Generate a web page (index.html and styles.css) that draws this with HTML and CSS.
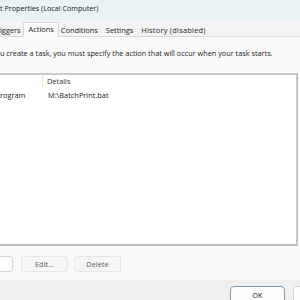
FILE: index.html
```html
<!DOCTYPE html>
<html>
<head>
<meta charset="utf-8">
<link rel="stylesheet" href="styles.css">
</head>
<body>
<div class="dialog">
  <div class="titlebar"><span class="title">t Properties (Local Computer)</span></div>
  <div class="tabstrip">
    <span class="tab">iggers</span>
    <span class="tab selected">Actions</span>
    <span class="tab">Conditions</span>
    <span class="tab">Settings</span>
    <span class="tab">History (disabled)</span>
  </div>
  <div class="page">
    <p class="intro">u create a task, you must specify the action that will occur when your task starts.</p>
    <div class="listview">
      <div class="lv-header">
        <span class="col col-action"></span>
        <span class="col col-details">Details</span>
      </div>
      <div class="lv-row">
        <span class="cell cell-action">rogram</span>
        <span class="cell cell-details">M:\BatchPrint.bat</span>
      </div>
    </div>
    <div class="actions">
      <button class="btn btn-new" aria-label="New"></button>
      <button class="btn btn-flat">Edit...</button>
      <button class="btn btn-flat">Delete</button>
    </div>
  </div>
  <div class="footer">
    <button class="btn btn-ok">OK</button>
    <button class="btn btn-cancel" aria-label="Cancel"></button>
  </div>
</div>
</body>
</html>
```

FILE: styles.css
```css
html, body {
  margin: 0;
  padding: 0;
  width: 300px;
  height: 300px;
  overflow: hidden;
  background: #f0f0f0;
}
.dialog {
  width: 300px;
  height: 300px;
  display: flex;
  flex-direction: column;
  font-family: "Open Sans", "Noto Sans", sans-serif;
  font-size: 7.4px;
  color: #1b1b1b;
  overflow: hidden;
}
.titlebar {
  height: 20px;
  flex: none;
  background: #e9f3f5;
  display: flex;
  align-items: center;
  padding-bottom: 4px;
  box-sizing: border-box;
}
.title {
  font-size: 7.2px;
  white-space: nowrap;
}
.tabstrip {
  height: 17px;
  flex: none;
  background: #f3f3f3;
  display: flex;
  align-items: flex-end;
  border-bottom: 1px solid #dadada;
  box-sizing: border-box;
}
.tab {
  height: 11px;
  line-height: 11px;
  padding: 0 4px;
  white-space: nowrap;
  flex: none;
}
.tab:first-child {
  padding-left: 0;
}
.tab:last-child {
  letter-spacing: 0.25px;
}
.tab.selected {
  height: 14px;
  line-height: 13px;
  margin: 0 -2px -1px -2px;
  padding: 0 4px 0 5px;
  background: #fbfbfb;
  border: 1px solid #dadada;
  border-bottom: none;
  position: relative;
  z-index: 1;
}
.page {
  flex: 1;
  background: #f9f9f9;
  display: flex;
  flex-direction: column;
  padding: 11px 0 8px 0;
  box-sizing: border-box;
}
.intro {
  margin: 0;
  white-space: nowrap;
  line-height: 10px;
  height: 10px;
  font-size: 7.3px;
}
.listview {
  margin-top: 15px;
  height: 173px;
  width: 298px;
  flex: none;
  box-sizing: border-box;
  background: #ffffff;
  border-top: 2px solid #c9c9c9;
  border-right: 2px solid #c6c6c6;
  border-bottom: 2px solid #bdbdbd;
}
.lv-header {
  display: flex;
  height: 12px;
}
.col {
  display: flex;
  align-items: center;
  white-space: nowrap;
  color: #333333;
}
.col-action {
  width: 43px;
  border-right: 1px solid #e5e5e5;
  box-sizing: border-box;
}
.col-details {
  padding-left: 4px;
}
.lv-row {
  display: flex;
  height: 14px;
  align-items: center;
  margin-top: 1px;
}
.cell {
  white-space: nowrap;
}
.cell-action {
  width: 48px;
  flex: none;
}
.actions {
  display: flex;
  gap: 6px;
  margin-top: 10px;
}
.btn {
  font-family: inherit;
  font-size: 7.4px;
  height: 16px;
  padding: 0;
  border-radius: 3px;
  box-sizing: border-box;
  color: #1b1b1b;
  flex: none;
}
.btn-new {
  width: 46px;
  margin-left: -33px;
  background: #fdfdfd;
  border: 1px solid #d4d4d4;
  margin-right: 2px;
}
.btn-flat {
  width: 47px;
  background: #f5f5f5;
  border: 1px solid #e6e6e6;
  color: #5c5c5c;
}
.footer {
  height: 20px;
  flex: none;
  background: #efefef;
  display: flex;
  align-items: flex-start;
  padding: 6px 0 0 230px;
  box-sizing: border-box;
  gap: 8px;
}
.btn-ok {
  width: 55px;
  height: 18px;
  background: #fdfdfd;
  border: 1px solid #7f9cb5;
  border-radius: 4px;
}
.btn-cancel {
  width: 55px;
  height: 18px;
  background: #fdfdfd;
  border: 1px solid #d4d4d4;
  border-radius: 4px;
}
```
